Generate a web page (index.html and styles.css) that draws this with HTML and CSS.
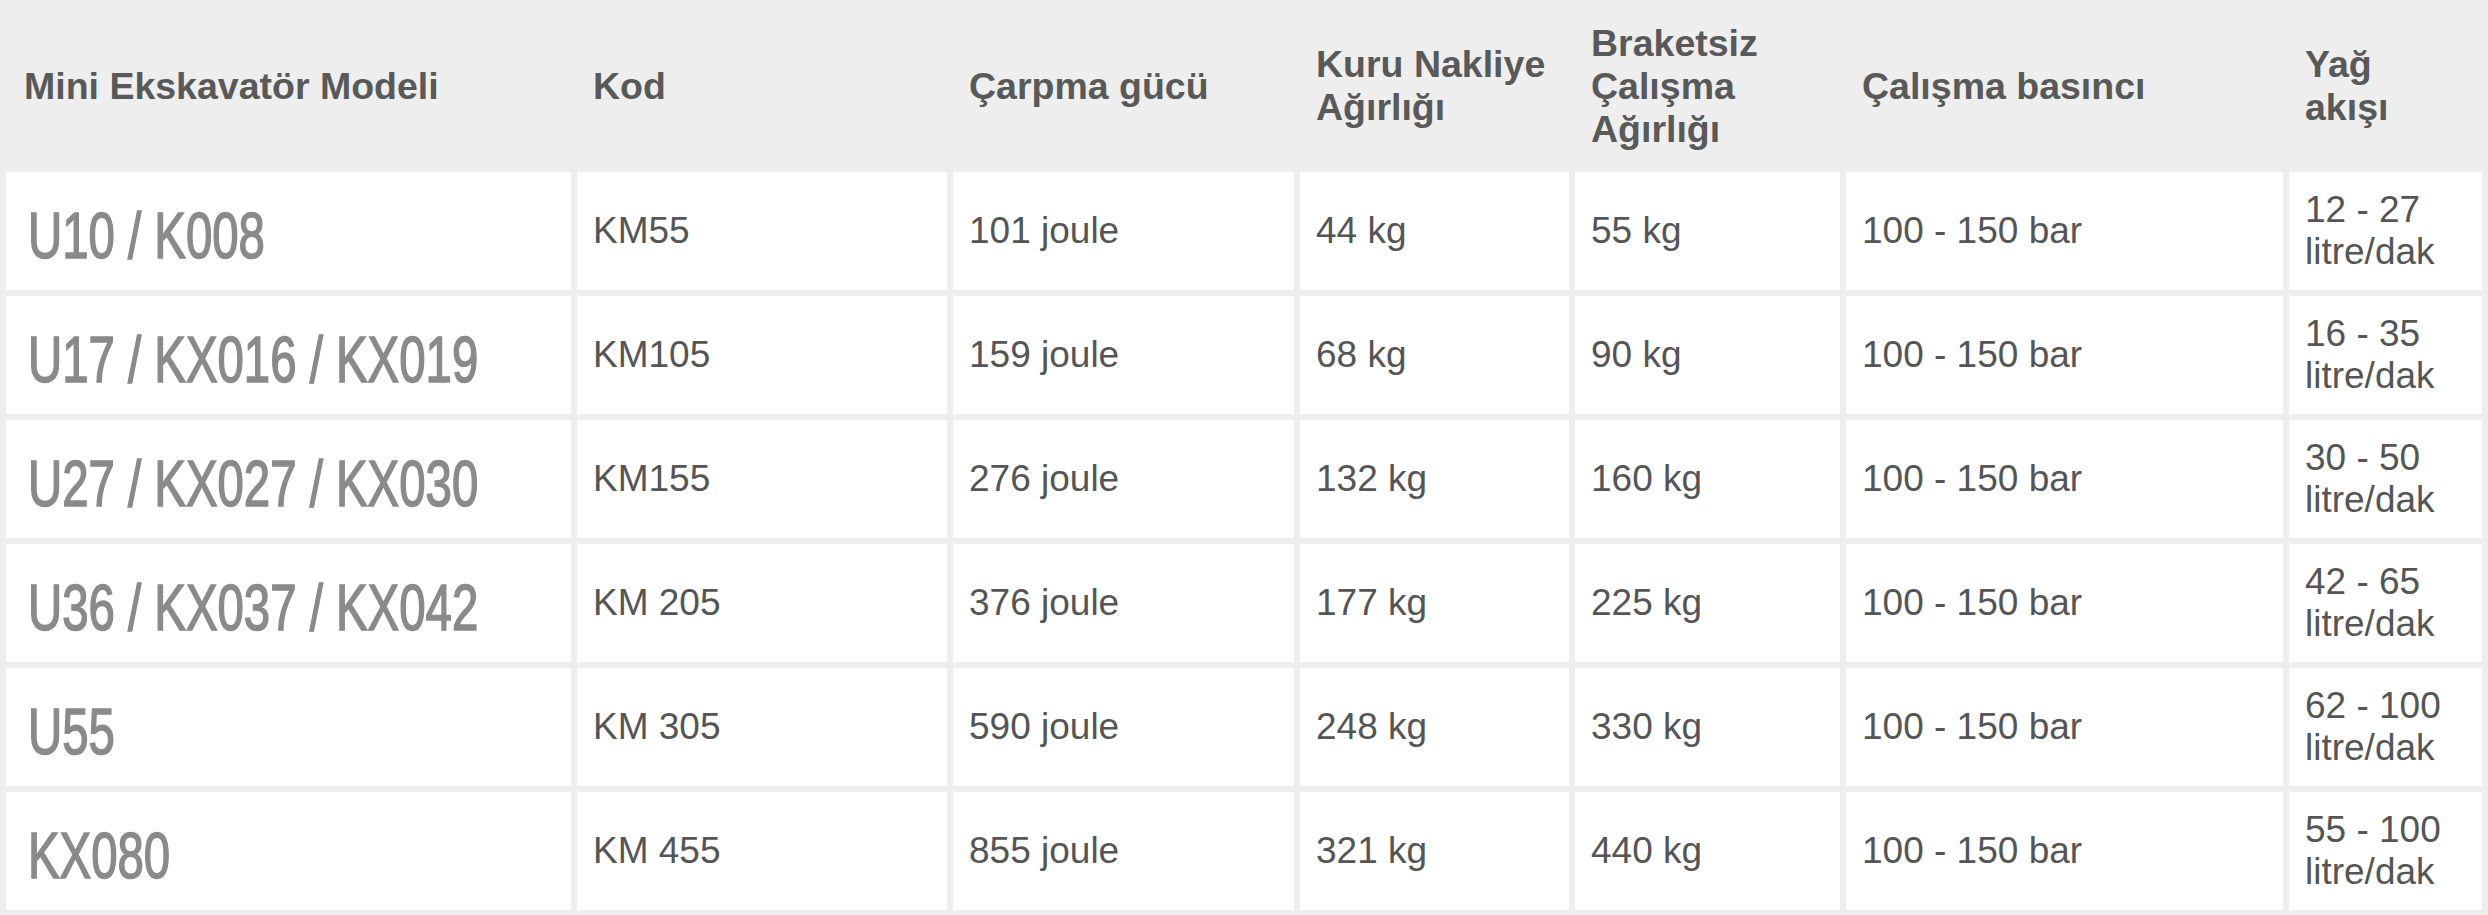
FILE: index.html
```html
<!DOCTYPE html>
<html lang="tr">
<head>
<meta charset="utf-8">
<title>Mini Ekskavatör Modeli</title>
<link rel="stylesheet" href="styles.css">
</head>
<body>
<table class="spec">
  <colgroup>
    <col class="c-model">
    <col class="c-kod">
    <col class="c-guc">
    <col class="c-kuru">
    <col class="c-brak">
    <col class="c-basinc">
    <col class="c-yag">
  </colgroup>
  <thead>
    <tr class="head">
      <th class="first">Mini Ekskavatör Modeli</th>
      <th>Kod</th>
      <th>Çarpma gücü</th>
      <th>Kuru Nakliye Ağırlığı</th>
      <th>Braketsiz Çalışma Ağırlığı</th>
      <th>Çalışma basıncı</th>
      <th class="narrow">Yağ akışı</th>
    </tr>
  </thead>
  <tbody>
    <tr>
      <td class="model"><span>U10 / K008</span></td>
      <td>KM55</td>
      <td>101 joule</td>
      <td>44 kg</td>
      <td>55 kg</td>
      <td>100 - 150 bar</td>
      <td>12 - 27 litre/dak</td>
    </tr>
    <tr>
      <td class="model"><span>U17 / KX016 / KX019</span></td>
      <td>KM105</td>
      <td>159 joule</td>
      <td>68 kg</td>
      <td>90 kg</td>
      <td>100 - 150 bar</td>
      <td>16 - 35 litre/dak</td>
    </tr>
    <tr>
      <td class="model"><span>U27 / KX027 / KX030</span></td>
      <td>KM155</td>
      <td>276 joule</td>
      <td>132 kg</td>
      <td>160 kg</td>
      <td>100 - 150 bar</td>
      <td>30 - 50 litre/dak</td>
    </tr>
    <tr>
      <td class="model"><span>U36 / KX037 / KX042</span></td>
      <td>KM 205</td>
      <td>376 joule</td>
      <td>177 kg</td>
      <td>225 kg</td>
      <td>100 - 150 bar</td>
      <td>42 - 65 litre/dak</td>
    </tr>
    <tr>
      <td class="model"><span>U55</span></td>
      <td>KM 305</td>
      <td>590 joule</td>
      <td>248 kg</td>
      <td>330 kg</td>
      <td>100 - 150 bar</td>
      <td>62 - 100 litre/dak</td>
    </tr>
    <tr>
      <td class="model"><span>KX080</span></td>
      <td>KM 455</td>
      <td>855 joule</td>
      <td>321 kg</td>
      <td>440 kg</td>
      <td>100 - 150 bar</td>
      <td>55 - 100 litre/dak</td>
    </tr>
  </tbody>
</table>
</body>
</html>
```

FILE: styles.css
```css
html, body {
  margin: 0;
  padding: 0;
  background: #eeeeee;
}

body {
  font-family: "Liberation Sans", Arial, Helvetica, sans-serif;
}

.spec {
  width: 2488px;
  table-layout: fixed;
  border-collapse: separate;
  border-spacing: 6px 6px;
  background: #eeeeee;
}

.c-model { width: 565px; }
.c-kod { width: 370px; }
.c-guc { width: 341px; }
.c-kuru { width: 269px; }
.c-brak { width: 265px; }
.c-basinc { width: 437px; }
.c-yag { width: 193px; }

.head th {
  height: 160px;
  padding: 0 8px 0 16px;
  background: #eeeeee;
  color: #595959;
  font-size: 37.5px;
  font-weight: bold;
  line-height: 43px;
  text-align: left;
  vertical-align: middle;
}

.head th.first {
  padding-left: 18px;
}

.head th.narrow {
  padding-right: 40px;
}

tbody td {
  height: 118px;
  padding: 0 8px 0 16px;
  background: #ffffff;
  color: #555555;
  font-size: 37px;
  line-height: 42px;
  text-align: left;
  vertical-align: middle;
}

tbody td.model {
  padding-left: 22px;
  white-space: nowrap;
  overflow: visible;
}

.model span {
  display: inline-block;
  color: #8a8a8a;
  font-size: 64px;
  font-weight: normal;
  line-height: 64px;
  -webkit-text-stroke: 1.6px #8a8a8a;
  transform: scaleX(0.74);
  transform-origin: left center;
  padding-top: 10px;
}
```
